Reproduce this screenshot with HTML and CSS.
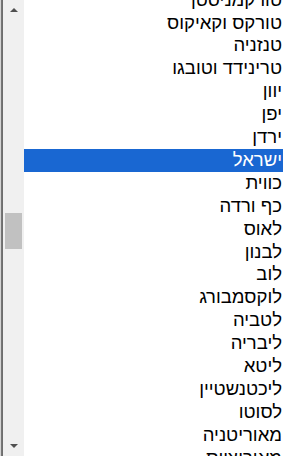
FILE: index.html
```html
<!DOCTYPE html>
<html lang="he">
<head>
    <meta charset="UTF-8">
    <title>רשימת מדינות</title>
    <link rel="stylesheet" href="styles.css">
</head>
<body>
    <div class="box">
        <div class="edge"></div>
        <div class="bar">
            <div class="up"></div>
            <div class="track">
                <div class="thumb"></div>
            </div>
            <div class="down"></div>
        </div>
        <div class="list">
            <div class="opt first">טורקמניסטן</div>
            <div class="opt">טורקס וקאיקוס</div>
            <div class="opt">טנזניה</div>
            <div class="opt">טרינידד וטובגו</div>
            <div class="opt">יוון</div>
            <div class="opt">יפן</div>
            <div class="opt">ירדן</div>
            <div class="opt act">ישראל</div>
            <div class="opt">כווית</div>
            <div class="opt">כף ורדה</div>
            <div class="opt">לאוס</div>
            <div class="opt">לבנון</div>
            <div class="opt">לוב</div>
            <div class="opt">לוקסמבורג</div>
            <div class="opt">לטביה</div>
            <div class="opt">ליבריה</div>
            <div class="opt">ליטא</div>
            <div class="opt">ליכטנשטיין</div>
            <div class="opt">לסוטו</div>
            <div class="opt">מאוריטניה</div>
            <div class="opt">מאוריציוס</div>
        </div>
    </div>
</body>
</html>
```

FILE: styles.css
```css
body{
    margin: 0;
    background-color: white;
}
.box{
    display: flex;
    height: 456px;
    overflow: hidden;
}
.edge{
    width: 3px;
    flex: none;
    background: linear-gradient(to right, #d4d4d4 0, #d4d4d4 1px, #7a7a7a 1px, #6a6a6a 3px);
}
.bar{
    width: 21px;
    flex: none;
    background-color: #f0f0f0;
    display: flex;
    flex-direction: column;
}
.up,.down{
    height: 21px;
    flex: none;
    display: flex;
    justify-content: center;
}
.up::after,.down::after{
    content: "";
    width: 0;
    height: 0;
    border-left: 4px solid transparent;
    border-right: 4px solid transparent;
}
.up{
    align-items: flex-start;
}
.up::after{
    margin-top: 8px;
    border-bottom: 4px solid #505050;
}
.down{
    align-items: flex-end;
}
.down::after{
    margin-bottom: 8px;
    border-top: 4px solid #505050;
}
.track{
    flex: 1;
    padding: 192px 2px 0;
}
.thumb{
    height: 36px;
    background-color: #c1c1c1;
}
.list{
    flex: 1;
    direction: rtl;
    font-family: "Liberation Sans", Arial, sans-serif;
    font-size: 18.5px;
    color: black;
}
.opt{
    height: 22.9px;
    line-height: 22.9px;
    padding: 0 1px 0 2px;
    white-space: nowrap;
}
.first{
    margin-top: -11.3px;
}
.act{
    background-color: #1967d2;
    color: white;
}
```
